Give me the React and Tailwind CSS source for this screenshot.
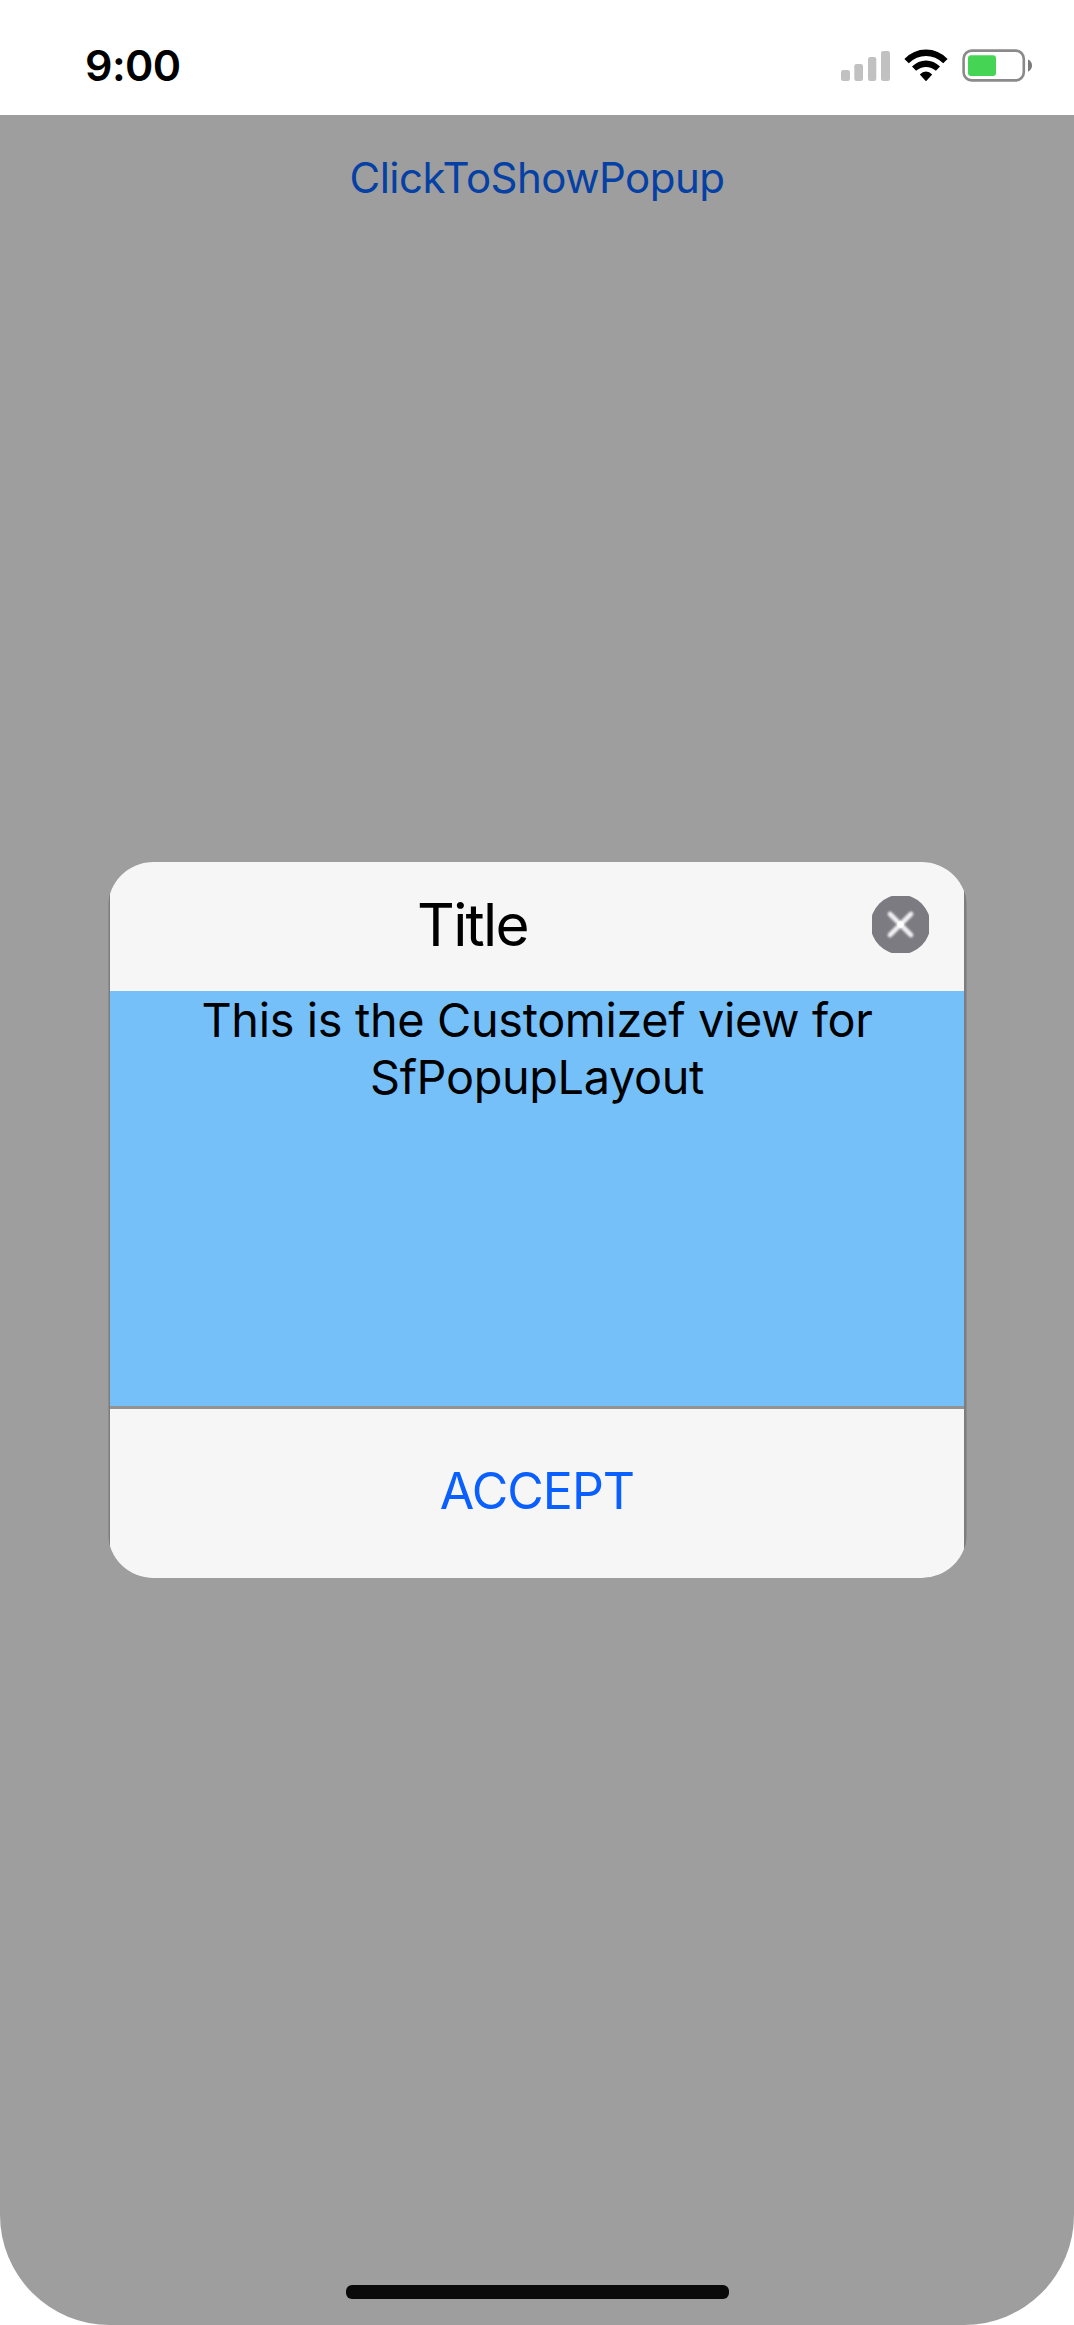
import React from "react";

function SignalIcon() {
  return (
    <svg className="block" width="49" height="33" viewBox="0 0 49 33" fill="#c1c1c1">
      <rect x="0" y="21" width="9" height="11" rx="2.3" />
      <rect x="13.3" y="15" width="8.7" height="17" rx="2.3" />
      <rect x="27" y="8" width="8.3" height="24" rx="2.3" />
      <rect x="40" y="2" width="9" height="30" rx="2.3" />
    </svg>
  );
}

function WifiIcon() {
  return (
    <svg className="block" width="44" height="33" viewBox="0 0 44 33" fill="#000">
      <path d="M0.4 9.9 Q9.4 0.4 22 0.4 Q34.6 0.4 43.6 9.9 L39.2 14.3 Q31.6 7.1 22 7.1 Q12.4 7.1 4.8 14.3 Z" />
      <path d="M8 17.6 Q14.2 11.4 22 11.4 Q29.8 11.4 36 17.6 L31.9 21.8 Q27.6 18 22 18 Q16.4 18 12.1 21.8 Z" />
      <path d="M15.8 25.4 Q18.6 22.6 22 22.6 Q25.4 22.6 28.2 25.4 L22.5 31.7 Q22 32.2 21.5 31.7 Z" />
    </svg>
  );
}

function BatteryIcon() {
  return (
    <svg className="block" width="71" height="33" viewBox="0 0 71 33">
      <rect x="1.6" y="1.6" width="60.2" height="29.8" rx="8.2" fill="none" stroke="#8a8a8a" strokeWidth="2.6" />
      <rect x="6" y="6.2" width="28" height="20.8" rx="3" fill="#46d455" />
      <path d="M66 10.6 Q70 12.4 70 16.5 Q70 20.6 66 22.8 Z" fill="#7a7a7a" />
    </svg>
  );
}

function CloseIcon() {
  return (
    <svg className="block" width="57" height="57" viewBox="0 0 57 57">
      <defs>
        <filter id="soft" x="-20%" y="-20%" width="140%" height="140%" colorInterpolationFilters="sRGB">
          <feGaussianBlur stdDeviation="0.8" />
        </filter>
      </defs>
      <circle cx="28.5" cy="28.5" r="29.8" fill="#7c7b82" />
      <path
        d="M18 18 L39 39 M39 18 L18 39"
        stroke="#f2f2f4"
        strokeWidth="4.6"
        strokeLinecap="round"
        filter="url(#soft)"
      />
      <circle cx="28.5" cy="28.5" r="3.2" fill="#fff" />
    </svg>
  );
}

function StatusBar() {
  return (
    <header className="flex h-[115px] items-start justify-between bg-white pl-[85px] pr-[41px]">
      <span className="pt-[35px] text-[43px] font-semibold leading-[60px] tracking-[-0.6px] text-black">9:00</span>
      <div className="flex items-center pt-[49px]">
        <SignalIcon />
        <div className="ml-[14px]"><WifiIcon /></div>
        <div className="ml-[14px]"><BatteryIcon /></div>
      </div>
    </header>
  );
}

function Popup() {
  return (
    <section className="mx-auto h-[715.6px] w-[859px] overflow-hidden rounded-[45px] bg-[#8c8c8c] px-[1px]">
      <div className="flex h-full flex-col bg-[#7e7e7e] px-[1.5px]">
        <div className="flex h-[129px] shrink-0 bg-[#f6f6f6]">
          <h1 className="w-[725px] text-center text-[58.5px] leading-[126px] tracking-[-1.7px] text-black">Title</h1>
          <button aria-label="Close" className="ml-[37px] mt-[34px] h-[57px] w-[57px]">
            <CloseIcon />
          </button>
        </div>
        <p className="h-[415px] shrink-0 bg-[#76c0fa] pt-[1px] text-center text-[46.8px] leading-[57.3px] tracking-[-0.34px] text-black">
          This is the Customizef view for
          <br />
          SfPopupLayout
        </p>
        <div className="h-[3px] shrink-0 bg-[#939393]" />
        <div className="flex flex-1 items-start justify-center bg-[#f6f6f6]">
          <button className="text-[50px] leading-[164px] tracking-[-0.95px] text-[#0a60ff]">ACCEPT</button>
        </div>
      </div>
    </section>
  );
}

export default function App() {
  return (
    <div className="flex h-[2325px] w-[1074px] flex-col overflow-hidden bg-white font-[Inter,sans-serif]">
      <StatusBar />
      <main className="flex flex-1 flex-col items-center rounded-b-[110px] bg-[#9e9e9e] pb-[26px] pt-[38px]">
        <button className="h-[50px] text-[42px] leading-[50px] tracking-[-0.53px] text-[#0540a5]">ClickToShowPopup</button>
        <div className="mt-[659px]">
          <Popup />
        </div>
        <div className="mt-auto h-[14px] w-[383px] rounded-[6px] bg-[#0a0a0a]" />
      </main>
    </div>
  );
}
